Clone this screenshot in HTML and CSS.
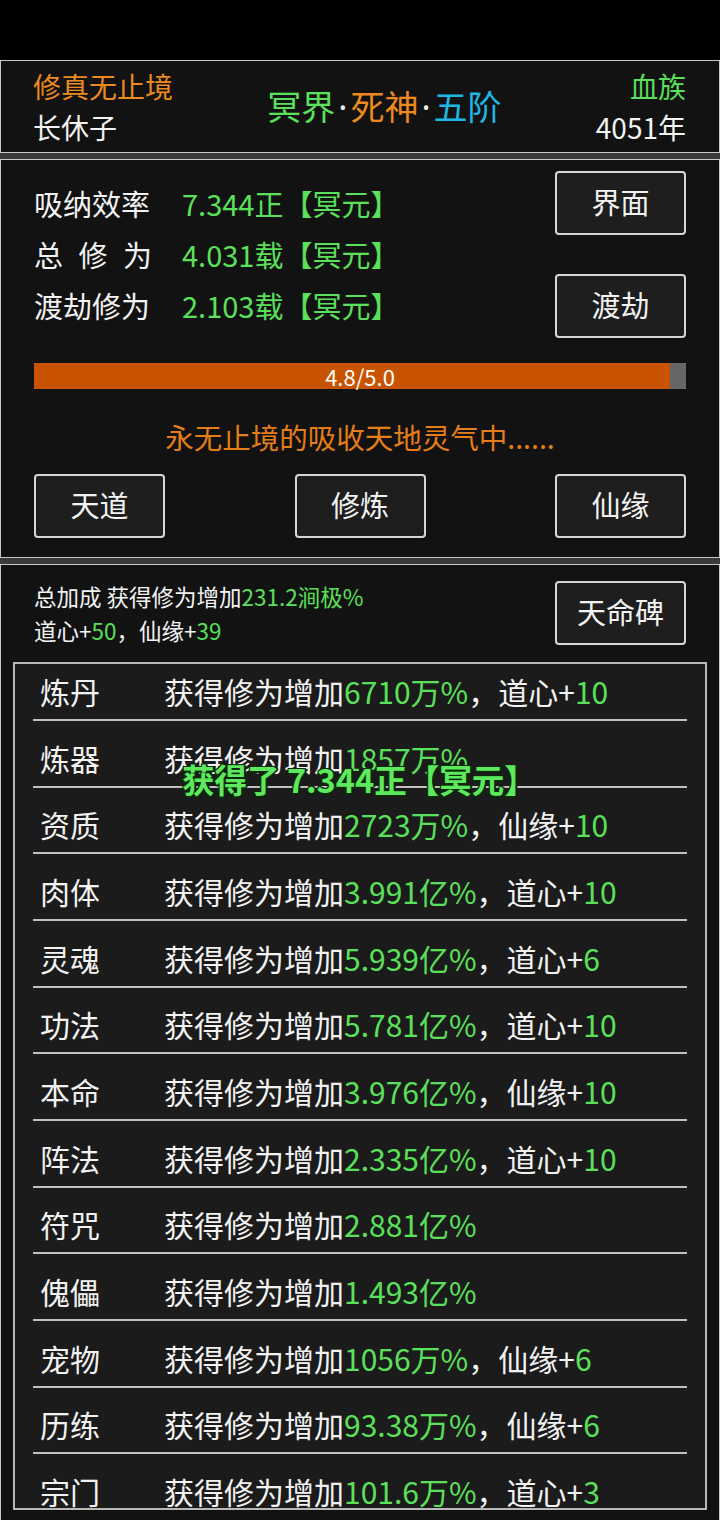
FILE: index.html
```html
<!DOCTYPE html>
<html lang="zh-CN">
<head>
<meta charset="utf-8">
<title>修真无止境</title>
<link rel="stylesheet" href="styles.css">
</head>
<body>
<div class="status"></div>
<div class="wrap">
  <section class="panel top">
    <div class="col">
      <div class="orange">修真无止境</div>
      <div>长休子</div>
    </div>
    <div class="title"><span class="green">冥界</span><span class="dot">·</span><span class="orange">死神</span><span class="dot">·</span><span class="cyan">五阶</span></div>
    <div class="col right">
      <div class="green">血族</div>
      <div>4051年</div>
    </div>
  </section>

  <section class="panel main">
    <div class="upper">
      <div class="stats">
        <div class="stat"><span class="lbl">吸纳效率</span><span class="green">7.344正【冥元】</span></div>
        <div class="stat"><span class="lbl spaced">总修为</span><span class="green">4.031载【冥元】</span></div>
        <div class="stat"><span class="lbl">渡劫修为</span><span class="green">2.103载【冥元】</span></div>
      </div>
      <div class="btn-col">
        <button class="btn">界面</button>
        <button class="btn">渡劫</button>
      </div>
    </div>
    <div class="bar"><div class="fill" style="width:97.5%"></div><span class="bar-text">4.8/5.0</span></div>
    <div class="msg">永无止境的吸收天地灵气中......</div>
    <div class="btn-row">
      <button class="btn">天道</button>
      <button class="btn">修炼</button>
      <button class="btn">仙缘</button>
    </div>
  </section>

  <section class="panel bonus">
    <div class="bonus-head">
      <div class="sum">
        <div>总加成 获得修为增加<span class="green">231.2涧极%</span></div>
        <div>道心+<span class="green">50</span>，仙缘+<span class="green">39</span></div>
      </div>
      <button class="btn">天命碑</button>
    </div>
    <div class="table">
      <div class="row"><span class="name">炼丹</span><span>获得修为增加<span class="green">6710万%</span>，道心+<span class="green">10</span></span></div>
      <div class="row"><span class="name">炼器</span><span>获得修为增加<span class="green">1857万%</span></span></div>
      <div class="row"><span class="name">资质</span><span>获得修为增加<span class="green">2723万%</span>，仙缘+<span class="green">10</span></span></div>
      <div class="row"><span class="name">肉体</span><span>获得修为增加<span class="green">3.991亿%</span>，道心+<span class="green">10</span></span></div>
      <div class="row"><span class="name">灵魂</span><span>获得修为增加<span class="green">5.939亿%</span>，道心+<span class="green">6</span></span></div>
      <div class="row"><span class="name">功法</span><span>获得修为增加<span class="green">5.781亿%</span>，道心+<span class="green">10</span></span></div>
      <div class="row"><span class="name">本命</span><span>获得修为增加<span class="green">3.976亿%</span>，仙缘+<span class="green">10</span></span></div>
      <div class="row"><span class="name">阵法</span><span>获得修为增加<span class="green">2.335亿%</span>，道心+<span class="green">10</span></span></div>
      <div class="row"><span class="name">符咒</span><span>获得修为增加<span class="green">2.881亿%</span></span></div>
      <div class="row"><span class="name">傀儡</span><span>获得修为增加<span class="green">1.493亿%</span></span></div>
      <div class="row"><span class="name">宠物</span><span>获得修为增加<span class="green">1056万%</span>，仙缘+<span class="green">6</span></span></div>
      <div class="row"><span class="name">历练</span><span>获得修为增加<span class="green">93.38万%</span>，仙缘+<span class="green">6</span></span></div>
      <div class="row"><span class="name">宗门</span><span>获得修为增加<span class="green">101.6万%</span>，道心+<span class="green">3</span></span></div>
    </div>
  </section>
</div>
<div class="toast">获得了 7.344正【冥元】</div>
</body>
</html>
```

FILE: styles.css
```css
* { box-sizing: border-box; }
html, body {
  margin: 0;
  padding: 0;
  background: #000;
  width: 720px;
  height: 1520px;
  overflow: hidden;
  font-family: "Noto Sans CJK SC", "Noto Sans", sans-serif;
  color: #f2f2f2;
}
.status { height: 60px; background: #000; }
.wrap {
  display: flex;
  flex-direction: column;
  gap: 6px;
  background: #3a3a3a;
}
.panel {
  background: #121212;
  border: 1px solid #c8c8c8;
}
.green { color: #5ae05a; }
.orange { color: #ec8a1f; }
.cyan { color: #1eb6e2; }

/* top panel */
.top {
  height: 93px;
  display: flex;
  justify-content: space-between;
  align-items: center;
  padding: 0 33px 0 32px;
}
.col {
  font-size: 28px;
  line-height: 41px;
}
.col.right { text-align: right; }
.title {
  font-size: 34px;
  line-height: 44px;
}
.dot {
  color: #f2f2f2;
  font-family: "Noto Sans", "DejaVu Sans", sans-serif;
  margin: 0 3px;
}

/* main panel */
.main {
  height: 399px;
  padding: 11px 33px 0 33px;
}
.upper {
  display: flex;
  justify-content: space-between;
  height: 167px;
}
.stats {
  padding-top: 7px;
  display: flex;
  flex-direction: column;
  gap: 1px;
}
.stat {
  font-size: 29px;
  line-height: 50px;
  white-space: nowrap;
}
.lbl {
  display: inline-block;
  width: 148px;
}
.lbl.spaced { letter-spacing: 15.5px; }
.btn-col {
  display: flex;
  flex-direction: column;
  justify-content: space-between;
}
.btn {
  width: 131px;
  height: 64px;
  background: #1e1e1e;
  border: 2px solid #d6d6d6;
  border-radius: 4px;
  color: #f2f2f2;
  font-family: "Noto Sans CJK SC", "Noto Sans", sans-serif;
  font-size: 29px;
  padding: 0 0 3px 0;
  line-height: 57px;
}
.bar {
  position: relative;
  margin-top: 25px;
  height: 26px;
  background: #666;
}
.fill {
  height: 100%;
  background: #c85300;
}
.bar-text {
  position: absolute;
  left: 0; right: 0; top: 0;
  text-align: center;
  font-size: 22px;
  line-height: 26px;
  color: #fff;
}
.msg {
  margin-top: 28px;
  text-align: center;
  font-size: 28.5px;
  line-height: 40px;
  color: #e57d18;
}
.btn-row {
  margin-top: 17px;
  display: flex;
  justify-content: space-between;
}

/* bonus panel */
.bonus {
  height: 960px;
  padding-top: 16px;
}
.bonus-head {
  display: flex;
  justify-content: space-between;
  padding: 0 33px 0 33px;
}
.sum {
  font-size: 22.5px;
  line-height: 34px;
  margin-top: -2px;
}
.table {
  margin: 15px 12px 0 12px;
  height: 848px;
  overflow: hidden;
  background: #1b1b1b;
  border: 2px solid #b8b8b8;
  padding: 0 18px;
}
.row {
  height: 66.67px;
  display: flex;
  align-items: flex-end;
  padding: 0 0 10px 7px;
  border-bottom: 2px solid #c0c0c0;
  font-size: 30px;
  line-height: 36px;
  white-space: nowrap;
}
.row:first-child { height: 57px; }
.name {
  display: inline-block;
  width: 124px;
}

/* floating toast */
.toast {
  position: absolute;
  left: 182px;
  top: 758px;
  font-size: 32.5px;
  line-height: 42px;
  font-weight: bold;
  color: #5ee85e;
  white-space: nowrap;
  text-shadow: 1px 1px 0 #0a2a0a, -1px -1px 0 #0a2a0a, 1px -1px 0 #0a2a0a, -1px 1px 0 #0a2a0a, 0 2px 0 #0a2a0a, 0 -1px 0 #0a2a0a, 2px 0 0 #0a2a0a, -1px 0 0 #0a2a0a;
}
```
